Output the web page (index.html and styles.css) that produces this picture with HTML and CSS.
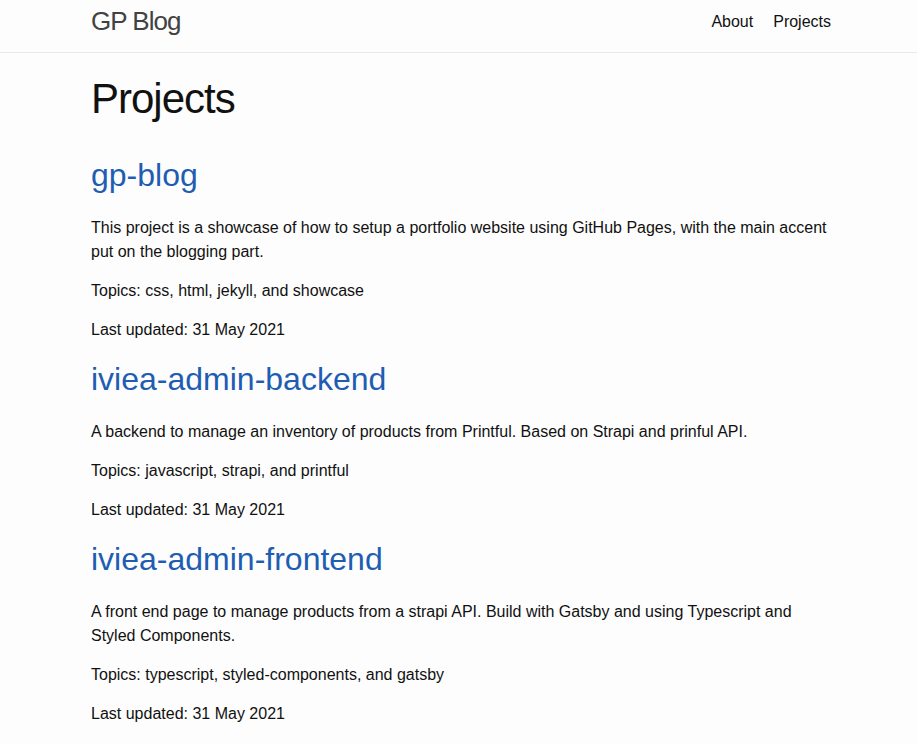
FILE: index.html
```html
<!DOCTYPE html>
<html lang="en">
<head>
<meta charset="utf-8">
<title>Projects | GP Blog</title>
<link rel="stylesheet" href="styles.css">
</head>
<body>
<header class="site-header">
  <div class="wrapper header-inner">
    <a class="site-title" href="#">GP Blog</a>
    <nav class="site-nav">
      <a class="page-link" href="#">About</a>
      <a class="page-link" href="#">Projects</a>
    </nav>
  </div>
</header>
<main class="page-content">
  <div class="wrapper">
    <h1 class="page-heading">Projects</h1>
    <section class="project">
      <h2 class="project-title"><a href="#">gp-blog</a></h2>
      <p>This project is a showcase of how to setup a portfolio website using GitHub Pages, with the main accent put on the blogging part.</p>
      <p>Topics: css, html, jekyll, and showcase</p>
      <p>Last updated: 31 May 2021</p>
    </section>
    <section class="project">
      <h2 class="project-title"><a href="#">iviea-admin-backend</a></h2>
      <p>A backend to manage an inventory of products from Printful. Based on Strapi and prinful API.</p>
      <p>Topics: javascript, strapi, and printful</p>
      <p>Last updated: 31 May 2021</p>
    </section>
    <section class="project">
      <h2 class="project-title"><a href="#">iviea-admin-frontend</a></h2>
      <p>A front end page to manage products from a strapi API. Build with Gatsby and using Typescript and Styled Components.</p>
      <p>Topics: typescript, styled-components, and gatsby</p>
      <p>Last updated: 31 May 2021</p>
    </section>
  </div>
</main>
</body>
</html>
```

FILE: styles.css
```css
* { box-sizing: border-box; }

html, body {
  margin: 0;
  padding: 0;
}

body {
  background: #fdfdfd;
  color: #111111;
  font-family: "Liberation Sans", Arial, Helvetica, sans-serif;
  font-size: 16px;
  line-height: 24px;
}

a { text-decoration: none; }

.wrapper {
  width: 740px;
  margin-left: 91px;
}

.site-header {
  height: 53px;
  border-bottom: 1px solid #e8e8e8;
}

.header-inner {
  display: flex;
  justify-content: space-between;
  align-items: flex-start;
  height: 52px;
}

.site-title {
  font-size: 26px;
  font-weight: 300;
  letter-spacing: -1px;
  line-height: 42px;
  color: #424242;
}

.site-nav {
  display: flex;
  gap: 20px;
  line-height: 43px;
}

.page-link {
  color: #111111;
}

.page-content {
  padding-top: 25px;
}

.page-heading {
  margin: 0 0 33px;
  font-size: 42px;
  font-weight: 400;
  letter-spacing: -1px;
  line-height: 42px;
}

.project-title {
  margin: 0 0 19px;
  font-size: 32px;
  font-weight: 400;
  line-height: 44px;
}

.project-title a {
  color: #1f5db2;
}

p {
  margin: 0 0 15px;
}
```
